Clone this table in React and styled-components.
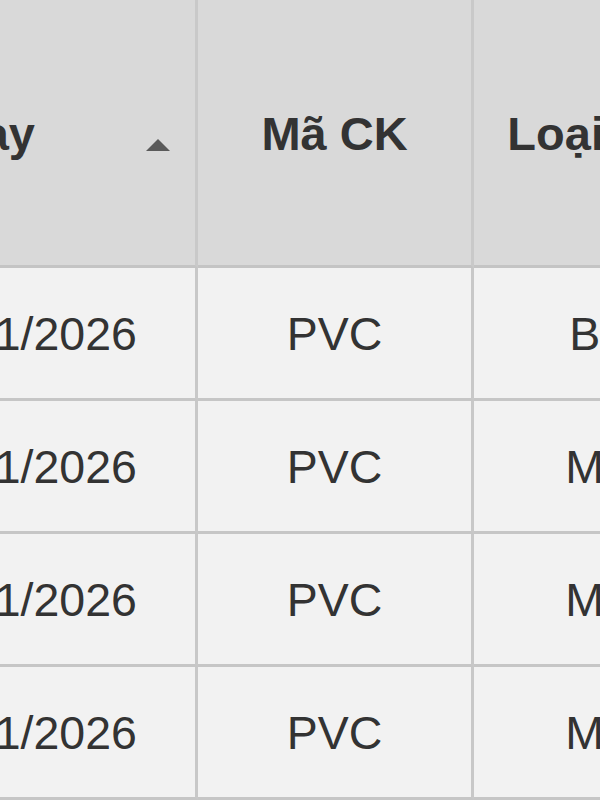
import React from "react";
import styled, { createGlobalStyle } from "styled-components";

const GlobalStyle = createGlobalStyle`
  html, body { margin: 0; padding: 0; background: #f2f2f2; overflow: hidden; }
  * { box-sizing: border-box; }
`;

const Viewport = styled.div`
  width: 600px;
  height: 800px;
  overflow: hidden;
  background: #f2f2f2;
`;

const Grid = styled.div`
  display: grid;
  grid-template-columns: 352px 276px 276px;
  grid-template-rows: 268px repeat(4, 133px);
  margin-left: -154px;
  width: 904px;
  font-family: "Liberation Sans", Arial, sans-serif;
  color: #333333;
`;

const HeadCell = styled.div`
  background: #d9d9d9;
  border-right: 3px solid #c9c9c9;
  border-bottom: 3px solid #c4c4c4;
  font-weight: bold;
  font-size: 47px;
  display: ${(p) => (p.$sortable ? "grid" : "flex")};
  grid-template-columns: 1fr auto;
  column-gap: 37px;
  align-items: center;
  justify-content: center;
  padding-right: ${(p) => (p.$sortable ? "25px" : "0")};
  padding-top: 2px;
  white-space: nowrap;
`;

const HeadLabel = styled.span`
  text-align: center;
`;

const SortIcon = styled.svg`
  width: 24px;
  height: 12px;
  display: block;
  margin-top: 22px;
`;

const Cell = styled.div`
  background: #f2f2f2;
  border-right: 3px solid #c8c8c8;
  border-bottom: 3px solid #c6c6c6;
  font-size: 46.5px;
  display: flex;
  align-items: center;
  justify-content: center;
  white-space: nowrap;
  padding-top: 2px;
`;

const rows = [
  { date: "15/01/2026", code: "PVC", type: "Bán" },
  { date: "14/01/2026", code: "PVC", type: "Mua" },
  { date: "13/01/2026", code: "PVC", type: "Mua" },
  { date: "12/01/2026", code: "PVC", type: "Mua" },
];

export default function App() {
  return (
    <>
      <GlobalStyle />
      <Viewport>
        <Grid>
          <HeadCell $sortable>
            <HeadLabel>Ngay</HeadLabel>
            <SortIcon viewBox="0 0 24 12">
              <polygon points="12,0 24,12 0,12" fill="#5a5a5a" />
            </SortIcon>
          </HeadCell>
          <HeadCell>Mã CK</HeadCell>
          <HeadCell>Loại lệnh</HeadCell>
          {rows.map((r, i) => (
            <React.Fragment key={i}>
              <Cell>{r.date}</Cell>
              <Cell>{r.code}</Cell>
              <Cell>{r.type}</Cell>
            </React.Fragment>
          ))}
        </Grid>
      </Viewport>
    </>
  );
}
